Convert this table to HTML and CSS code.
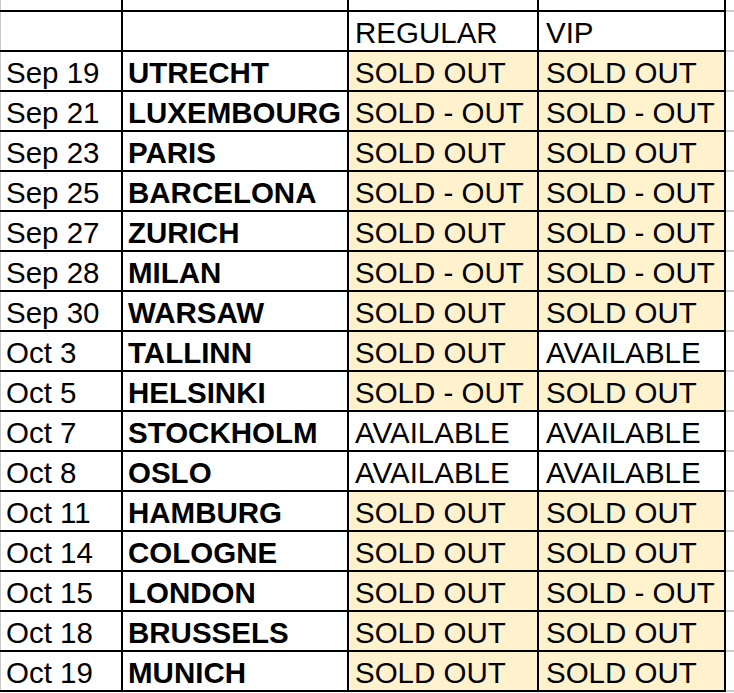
FILE: index.html
```html
<!DOCTYPE html>
<html>
<head>
<meta charset="utf-8">
<link rel="stylesheet" href="styles.css">
</head>
<body>
<div class="page">
  <div class="sheet">
    <div class="cell c1"></div><div class="cell"></div><div class="cell"></div><div class="cell"></div>
    <div class="cell c1"></div><div class="cell"></div><div class="cell">REGULAR</div><div class="cell c4">VIP</div>

    <div class="cell c1">Sep 19</div><div class="cell city">UTRECHT</div><div class="cell sold">SOLD OUT</div><div class="cell c4 sold">SOLD OUT</div>
    <div class="cell c1">Sep 21</div><div class="cell city">LUXEMBOURG</div><div class="cell sold">SOLD - OUT</div><div class="cell c4 sold">SOLD - OUT</div>
    <div class="cell c1">Sep 23</div><div class="cell city">PARIS</div><div class="cell sold">SOLD OUT</div><div class="cell c4 sold">SOLD OUT</div>
    <div class="cell c1">Sep 25</div><div class="cell city">BARCELONA</div><div class="cell sold">SOLD - OUT</div><div class="cell c4 sold">SOLD - OUT</div>
    <div class="cell c1">Sep 27</div><div class="cell city">ZURICH</div><div class="cell sold">SOLD OUT</div><div class="cell c4 sold">SOLD - OUT</div>
    <div class="cell c1">Sep 28</div><div class="cell city">MILAN</div><div class="cell sold">SOLD - OUT</div><div class="cell c4 sold">SOLD - OUT</div>
    <div class="cell c1">Sep 30</div><div class="cell city">WARSAW</div><div class="cell sold">SOLD OUT</div><div class="cell c4 sold">SOLD OUT</div>
    <div class="cell c1">Oct 3</div><div class="cell city">TALLINN</div><div class="cell sold">SOLD OUT</div><div class="cell c4">AVAILABLE</div>
    <div class="cell c1">Oct 5</div><div class="cell city">HELSINKI</div><div class="cell sold">SOLD - OUT</div><div class="cell c4 sold">SOLD OUT</div>
    <div class="cell c1">Oct 7</div><div class="cell city">STOCKHOLM</div><div class="cell">AVAILABLE</div><div class="cell c4">AVAILABLE</div>
    <div class="cell c1">Oct 8</div><div class="cell city">OSLO</div><div class="cell">AVAILABLE</div><div class="cell c4">AVAILABLE</div>
    <div class="cell c1">Oct 11</div><div class="cell city">HAMBURG</div><div class="cell sold">SOLD OUT</div><div class="cell c4 sold">SOLD OUT</div>
    <div class="cell c1">Oct 14</div><div class="cell city">COLOGNE</div><div class="cell sold">SOLD OUT</div><div class="cell c4 sold">SOLD OUT</div>
    <div class="cell c1">Oct 15</div><div class="cell city">LONDON</div><div class="cell sold">SOLD OUT</div><div class="cell c4 sold">SOLD - OUT</div>
    <div class="cell c1">Oct 18</div><div class="cell city">BRUSSELS</div><div class="cell sold">SOLD OUT</div><div class="cell c4 sold">SOLD OUT</div>
    <div class="cell c1">Oct 19</div><div class="cell city">MUNICH</div><div class="cell sold">SOLD OUT</div><div class="cell c4 sold">SOLD OUT</div>
  </div>
  <div class="edge"></div>
</div>
</body>
</html>
```

FILE: styles.css
```css
html, body {
  margin: 0;
  padding: 0;
  background: #ffffff;
}

.page {
  display: flex;
  align-items: flex-start;
  width: 734px;
  height: 693px;
  overflow: hidden;
}

.sheet {
  display: grid;
  grid-template-columns: 121px 224px 188px 185px;
  grid-template-rows: 10px repeat(17, 38px);
  gap: 2px;
  background: #000000;
  border-right: 2px solid #000000;
  border-bottom: 2px solid #000000;
  font-family: "Liberation Sans", Arial, sans-serif;
  font-size: 29.5px;
  color: #000000;
}

.cell {
  background: #ffffff;
  display: flex;
  align-items: flex-end;
  padding: 0 0 0 6px;
  white-space: nowrap;
  overflow: hidden;
  line-height: normal;
}

.c1 {
  box-shadow: inset 1px 0 0 #c8c8c8;
}

.c4 {
  padding-left: 7px;
}

.city {
  font-weight: bold;
  padding-left: 5px;
}

.sold {
  background: #fff2cc;
}

.edge {
  width: 8px;
  height: 693px;
  background-image: linear-gradient(to bottom, #cccccc 0, #cccccc 2px, transparent 2px);
  background-size: 8px 40px;
  background-position: 0 10px;
  background-repeat: repeat-y;
}
```
